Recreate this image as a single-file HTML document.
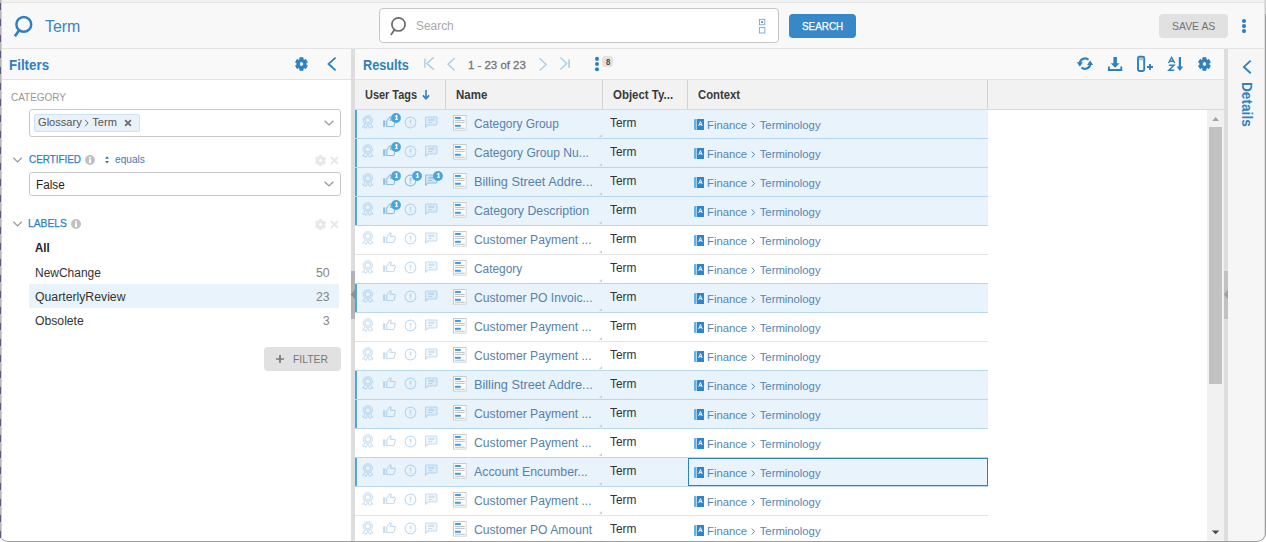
<!DOCTYPE html>
<html>
<head>
<meta charset="utf-8">
<title>Term</title>
<style>
*{box-sizing:border-box;margin:0;padding:0}
html,body{width:1266px;height:542px;overflow:hidden;background:#fff;font-family:"Liberation Sans",sans-serif;}
body{position:relative;color:#333;font-size:13px;}
.a,.t,.ic{position:absolute}
.ic{overflow:visible;display:block}
.t{white-space:nowrap;line-height:1;transform-origin:0 0;z-index:3}
.row{left:355px;width:633px;height:30px;border-bottom:1px solid #e4e4e4;background:transparent}
.row.s{background:#e8f3fb;border-top:1px solid #b7d7ee;border-bottom:1px solid #b7d7ee;z-index:2}
.row.s:before{content:"";position:absolute;left:0;top:0;width:2px;height:28px;background:#4fa6de}
.rt{position:absolute;width:0;height:0;border-left:3px solid transparent;border-bottom:3px solid #cfcfcf;left:599px}
.sel{background:#fff;border:1px solid #c9c9c9;border-radius:3px}
.vs{background:#d2d2d2;width:1px;top:80px;height:29px}

</style>
</head>
<body>
<svg width="0" height="0" style="position:absolute"><defs>
<symbol id="gear" viewBox="-8 -8 16 16" preserveAspectRatio="none"><path d="M-1.76,-4.57 L-1.70,-6.33 L1.70,-6.33 L1.76,-4.57 L3.08,-3.81 L4.63,-4.63 L6.33,-1.70 L4.84,-0.77 L4.84,0.77 L6.33,1.70 L4.63,4.63 L3.08,3.81 L1.76,4.57 L1.70,6.33 L-1.70,6.33 L-1.76,4.57 L-3.08,3.81 L-4.63,4.63 L-6.33,1.70 L-4.84,0.77 L-4.84,-0.77 L-6.33,-1.70 L-4.63,-4.63 L-3.08,-3.81Z M2.3,0 A2.3,2.3 0 1,0 -2.3,0 A2.3,2.3 0 1,0 2.3,0Z" fill="currentColor" fill-rule="evenodd" stroke="currentColor" stroke-width="0.9" stroke-linejoin="round"/></symbol>
<symbol id="rb" viewBox="0 0 12 14"><g fill="none" stroke="currentColor"><circle cx="5.9" cy="5.4" r="3.75" stroke-width="2.6" opacity=".45"/><circle cx="5.9" cy="5.4" r="4.8" stroke-width="0.9" stroke-dasharray="1.6 0.9"/><circle cx="5.9" cy="5.4" r="2.6" stroke-width="0.9"/><path d="M2.9,9.2 L0.6,12.4 L3,12.1 L3.9,13.9 L5.8,10.6" stroke-width="1"/><path d="M8.9,9.2 L11.2,12.4 L8.8,12.1 L7.9,13.9 L6,10.6" stroke-width="1"/></g></symbol>
<symbol id="th" viewBox="0 0 14 12"><rect x="0.1" y="4.6" width="2.4" height="7" fill="currentColor"/><path d="M4,11.3 V5.3 L7.5,0.8 C8.7,0.9 8.8,2 8.4,3 L7.8,4.7 H11.8 C12.8,4.7 13.2,5.4 12.9,6.3 L11.7,10.5 C11.5,11.1 11.1,11.3 10.5,11.3 Z" fill="none" stroke="currentColor" stroke-width="1.25" stroke-linejoin="round"/></symbol>
<symbol id="ex" viewBox="0 0 13 13"><circle cx="6.5" cy="6.5" r="5.35" fill="none" stroke="currentColor" stroke-width="1.1"/><path d="M6.5,3.6 V7.5" stroke="currentColor" stroke-width="1.8" opacity=".8"/><rect x="5.6" y="8.6" width="1.8" height="1" fill="currentColor" opacity=".8"/></symbol>
<symbol id="cm" viewBox="0 0 13 12"><path d="M1.5,0.9 H11 A0.9,0.9 0 0 1 11.9,1.8 V8.1 A0.9,0.9 0 0 1 11,9 H3 L0.6,11.3 V1.8 A0.9,0.9 0 0 1 1.5,0.9Z" fill="currentColor" fill-opacity=".22" stroke="currentColor" stroke-width="1.05" stroke-linejoin="round"/><path d="M3.3,3.8 H9.4" stroke="currentColor" stroke-width="2.2" opacity=".8"/><path d="M3.3,6.5 H7.3" stroke="currentColor" stroke-width="1"/></symbol>
<symbol id="bd" viewBox="0 0 10 10"><circle cx="5" cy="5" r="4.9" fill="#4aa5dc"/><path d="M5.65,2 V6.3" stroke="#fff" stroke-width="1.35" fill="none"/><path d="M5.5,2.3 L3.9,3.7" stroke="#fff" stroke-width="1" fill="none"/><path d="M4,6.3 H7" stroke="#fff" stroke-width="1" fill="none"/></symbol>
<symbol id="doc" viewBox="0 0 14 16"><rect x="0.5" y="0.5" width="13" height="15" fill="#fff" stroke="#c3c3c3" stroke-width="0.9"/><rect x="2" y="2" width="6" height="2" fill="#3b9be0"/><rect x="2" y="5" width="10" height="1" fill="#bdbdbd"/><rect x="2" y="7" width="10" height="1" fill="#bdbdbd"/><rect x="2" y="10" width="6" height="2" fill="#3b9be0"/><rect x="2" y="13" width="10" height="1" fill="#bdbdbd"/></symbol>
<symbol id="cx" viewBox="0 0 10 11"><path d="M1.2,0 H2.4 V11 H1.2 A1.2,1.2 0 0 1 0,9.8 V1.2 A1.2,1.2 0 0 1 1.2,0Z" fill="#5db3e9"/><rect x="2.9" y="0" width="7.1" height="11" fill="#2f84cc"/><path d="M4.7,7 L6.45,2.6 L8.2,7 M5.3,5.6 H7.6" fill="none" stroke="#fff" stroke-width="0.95"/></symbol>
<symbol id="info" viewBox="0 0 10 10"><circle cx="5" cy="5" r="5" fill="#c1c1c1"/><rect x="4.1" y="4.1" width="1.9" height="4" fill="#fff"/><rect x="4.1" y="1.8" width="1.9" height="1.6" fill="#fff"/></symbol>
</defs></svg>
<div class="a" style="left:0;top:0;width:1266px;height:48px;background:#f8f8f8"></div>
<div class="a" style="left:0;top:0;width:1266px;height:2px;background:#f1f1f1"></div>
<div class="a" style="left:0;top:2px;width:1266px;height:1px;background:#e5e5e5"></div>
<div class="a" style="left:0;top:48px;width:1266px;height:1px;background:#e3e3e3"></div>
<svg class="ic" style="left:10px;top:12px" width="26" height="28"><circle cx="13.8" cy="12.4" r="7.4" fill="none" stroke="#2f80c2" stroke-width="2.5"/><path d="M9,18.4 L4.9,24.3" stroke="#2f80c2" stroke-width="2.7"/></svg>
<div id="t_title" class="t" style="left:44.91px;top:18.03px;font-size:16.5px;font-weight:normal;color:#3a84c3;transform:scaleX(0.9642);">Term</div>
<div class="a" style="left:379px;top:8px;width:400px;height:35px;background:#fff;border:1px solid #c6c6c6;border-radius:4px"></div>
<svg class="ic" style="left:386px;top:14px" width="24" height="24"><circle cx="12.5" cy="10.4" r="6.6" fill="none" stroke="#6b6b6b" stroke-width="1.7"/><path d="M8.6,15.6 L4.9,21" stroke="#6b6b6b" stroke-width="1.8"/></svg>
<div id="t_sph" class="t" style="left:415.52px;top:20.42px;font-size:12.5px;font-weight:normal;color:#a9a9a9;transform:scaleX(0.9516);">Search</div>
<svg class="ic" style="left:758px;top:18px" width="8" height="16"><rect x="1.4" y="1.4" width="5.4" height="5.4" fill="none" stroke="#77a6cf" stroke-width="0.9"/><rect x="3.1" y="3.1" width="2" height="2" fill="#5f97c9"/><rect x="1.4" y="9.6" width="5.4" height="5.4" fill="none" stroke="#77a6cf" stroke-width="0.9"/></svg>
<div class="a" style="left:789px;top:14px;width:67px;height:24px;background:#3688c8;border-radius:4px"></div>
<div id="t_sbtn" class="t" style="left:802.17px;top:20.89px;font-size:11px;font-weight:normal;color:#ffffff;transform:scaleX(0.9003);-webkit-text-stroke:.25px #fff;">SEARCH</div>
<div class="a" style="left:1159px;top:14px;width:69px;height:24px;background:#e1e1e1;border-radius:4px"></div>
<div id="t_save" class="t" style="left:1171.70px;top:20.89px;font-size:11px;font-weight:normal;color:#737373;transform:scaleX(0.9490);">SAVE AS</div>
<svg class="ic" style="left:1240px;top:17px" width="8" height="18"><circle cx="4" cy="4" r="2.1" fill="#2f80c2"/><circle cx="4" cy="9.1" r="2.1" fill="#2f80c2"/><circle cx="4" cy="14.1" r="2.1" fill="#2f80c2"/></svg>
<div class="a" style="left:0;top:49px;width:351px;height:30px;background:#f9f9f9"></div>
<div class="a" style="left:0;top:79px;width:351px;height:1px;background:#e2e2e2"></div>
<div id="t_filters" class="t" style="left:8.65px;top:57.10px;font-size:15px;font-weight:bold;color:#2f80c2;transform:scaleX(0.8917);">Filters</div>
<svg class="ic" style="left:294.30px;top:56.00px;color:#2f80c2;" width="14.9" height="16"><use href="#gear"/></svg>
<svg class="ic" style="left:326px;top:55px" width="12" height="18"><path d="M9.6,2.6 L2.6,8.9 L9.6,15.4" fill="none" stroke="#2f80c2" stroke-width="1.9"/></svg>
<div id="t_cat" class="t" style="left:10.67px;top:91.89px;font-size:11px;font-weight:normal;color:#979797;transform:scaleX(0.9042);">CATEGORY</div>
<div class="a sel" style="left:29px;top:109px;width:312px;height:28px"></div>
<div class="a" style="left:34px;top:114px;width:106px;height:18px;background:#e9f2fa;border:1px solid #d0e1f0;border-radius:2px"></div>
<div id="t_chip" class="t" style="left:38.13px;top:116.87px;font-size:11.5px;font-weight:normal;color:#555555;transform:scaleX(0.9652);">Glossary<svg width="5" height="8" style="margin:0 2.8px 0 3px;overflow:visible;vertical-align:-1.2px"><path d="M0.8,0.8 L3.9,4 L0.8,7.2" stroke="#6a6a6a" fill="none" stroke-width="1"/></svg>Term</div>
<svg class="ic" style="left:124px;top:119px" width="8" height="8"><path d="M1.1,1.1 L6.9,6.9 M6.9,1.1 L1.1,6.9" stroke="#6e6e6e" stroke-width="1.8"/></svg>
<svg class="ic" style="left:323px;top:119px" width="12" height="8"><path d="M1.6,1.7 L6,6 L10.4,1.7" fill="none" stroke="#959595" stroke-width="1.2"/></svg>
<svg class="ic" style="left:12px;top:156px" width="11" height="8"><path d="M1.3,1.8 L5.5,5.9 L9.7,1.8" fill="none" stroke="#9a9a9a" stroke-width="1.3"/></svg>
<div id="t_cert" class="t" style="left:28.55px;top:153.69px;font-size:11px;font-weight:normal;color:#2f80c2;transform:scaleX(0.8982);-webkit-text-stroke:.25px #2f80c2;">CERTIFIED</div>
<svg class="ic" style="left:84.80px;top:155.00px;" width="10" height="10"><use href="#info"/></svg>
<svg class="ic" style="left:104px;top:155px" width="6" height="10"><path d="M3,1.2 L4.9,3.8 H1.1Z M3,8.6 L4.9,6 H1.1Z" fill="#2f6db0"/></svg>
<div id="t_eq" class="t" style="left:114.60px;top:154.07px;font-size:11.5px;font-weight:normal;color:#3f79b1;transform:scaleX(0.8810);">equals</div>
<svg class="ic" style="left:313.50px;top:153.50px;color:#e8e8e8;" width="13" height="13"><use href="#gear"/></svg>
<svg class="ic" style="left:329.5px;top:155.5px" width="9" height="9"><path d="M1,1 L8,8 M8,1 L1,8" stroke="#e8e8e8" stroke-width="1.8"/></svg>
<div class="a sel" style="left:29px;top:172px;width:312px;height:24px"></div>
<div id="t_false" class="t" style="left:36.28px;top:179.42px;font-size:12.5px;font-weight:normal;color:#222222;transform:scaleX(0.9376);">False</div>
<svg class="ic" style="left:323px;top:180px" width="12" height="8"><path d="M1.6,1.7 L6,6 L10.4,1.7" fill="none" stroke="#959595" stroke-width="1.2"/></svg>
<svg class="ic" style="left:12px;top:220px" width="11" height="8"><path d="M1.3,1.8 L5.5,5.9 L9.7,1.8" fill="none" stroke="#9a9a9a" stroke-width="1.3"/></svg>
<div id="t_labels" class="t" style="left:28.25px;top:217.54px;font-size:11px;font-weight:normal;color:#2f80c2;transform:scaleX(0.9326);-webkit-text-stroke:.25px #2f80c2;">LABELS</div>
<svg class="ic" style="left:71.00px;top:219.00px;" width="10" height="10"><use href="#info"/></svg>
<svg class="ic" style="left:313.50px;top:217.50px;color:#e8e8e8;" width="13" height="13"><use href="#gear"/></svg>
<svg class="ic" style="left:329.5px;top:219.5px" width="9" height="9"><path d="M1,1 L8,8 M8,1 L1,8" stroke="#e8e8e8" stroke-width="1.8"/></svg>
<div class="a" style="left:29px;top:284px;width:310px;height:24px;background:#e8f3fb"></div>
<div id="t_all" class="t" style="left:35.49px;top:242.02px;font-size:12.5px;font-weight:bold;color:#222222;transform:scaleX(0.9148);">All</div>
<div id="t_l1" class="t" style="left:34.99px;top:267.32px;font-size:12.5px;font-weight:normal;color:#333333;transform:scaleX(0.9572);">NewChange</div>
<div id="t_l2" class="t" style="left:35.05px;top:291.32px;font-size:12.5px;font-weight:normal;color:#333333;transform:scaleX(0.9797);">QuarterlyReview</div>
<div id="t_l3" class="t" style="left:35.48px;top:315.22px;font-size:12.5px;font-weight:normal;color:#333333;transform:scaleX(0.9751);">Obsolete</div>
<div id="t_c1" class="t" style="left:315.87px;top:267.32px;font-size:12.5px;font-weight:normal;color:#858585;transform:scaleX(0.9851);">50</div>
<div id="t_c2" class="t" style="left:315.56px;top:291.32px;font-size:12.5px;font-weight:normal;color:#858585;transform:scaleX(0.9737);">23</div>
<div id="t_c3" class="t" style="left:322.61px;top:315.22px;font-size:12.5px;font-weight:normal;color:#858585;transform:scaleX(0.9441);">3</div>
<div class="a" style="left:264px;top:347px;width:77px;height:24px;background:#e1e1e1;border-radius:4px"></div>
<svg class="ic" style="left:275px;top:354px" width="10" height="10"><path d="M5,1 V9 M1,5 H9" stroke="#7a7a7a" stroke-width="1.7"/></svg>
<div id="t_fbtn" class="t" style="left:292.69px;top:353.89px;font-size:11px;font-weight:normal;color:#777777;transform:scaleX(0.9405);">FILTER</div>
<div class="a" style="left:351px;top:49px;width:4px;height:493px;background:#dddddd"></div>
<div class="a" style="left:351px;top:271px;width:4px;height:48px;background:#b3b3b3"></div>
<svg class="ic" style="left:350px;top:289px" width="6" height="11"><path d="M0.6,5.4 L5,0.8 V10Z" fill="#8f8f8f"/></svg>
<div class="a" style="left:355px;top:49px;width:869px;height:30px;background:#f9f9f9"></div>
<div class="a" style="left:355px;top:79px;width:869px;height:1px;background:#e2e2e2"></div>
<div id="t_results" class="t" style="left:363.12px;top:57.10px;font-size:15px;font-weight:bold;color:#2f80c2;transform:scaleX(0.8464);">Results</div>
<svg class="ic" style="left:422px;top:55px" width="14" height="18"><path d="M2.9,3.6 V12.8" stroke="#aacfe6" stroke-width="1.4"/><path d="M11.8,2.4 L4.8,8.5 L11.8,14.6" fill="none" stroke="#aacfe6" stroke-width="1.4"/></svg>
<svg class="ic" style="left:445px;top:55px" width="12" height="18"><path d="M9.8,3 L3,9.3 L9.8,15.5" fill="none" stroke="#aacfe6" stroke-width="1.4"/></svg>
<div id="t_pager" class="t" style="left:467.66px;top:60.32px;font-size:11.5px;font-weight:normal;color:#747474;transform:scaleX(0.9932);-webkit-text-stroke:.3px #747474;">1 - 23 of 23</div>
<svg class="ic" style="left:537px;top:55px" width="12" height="18"><path d="M2.5,3.2 L9.2,9.4 L2.5,15.6" fill="none" stroke="#aacfe6" stroke-width="1.4"/></svg>
<svg class="ic" style="left:558px;top:55px" width="14" height="18"><path d="M11.1,4.3 V12.7" stroke="#aacfe6" stroke-width="1.7"/><path d="M2.4,2.4 L8.7,8.4 L2.4,14.5" fill="none" stroke="#aacfe6" stroke-width="1.4"/></svg>
<svg class="ic" style="left:593px;top:55px" width="8" height="18"><circle cx="4" cy="3.9" r="2.05" fill="#2f80c2"/><circle cx="4" cy="9" r="2.05" fill="#2f80c2"/><circle cx="4" cy="14.2" r="2.05" fill="#2f80c2"/></svg>
<div class="a" style="left:602.3px;top:56px;width:10.5px;height:11px;background:#e2e2e2;border-radius:3px"></div>
<div class="t" style="left:605.6px;top:58px;font-size:8.5px;font-weight:bold;color:#4a4a4a;transform:scaleX(.92)">8</div>
<svg class="ic" style="left:1076px;top:56px" width="18" height="16">
<path d="M12.51,3.70 A5.25,5.25 0 0 0 3.80,6.87" fill="none" stroke="#2f80c2" stroke-width="2.2"/>
<path d="M0.8,6.3 H6.9 L3.85,10.8Z" fill="#2f80c2"/>
<path d="M5.49,11.50 A5.25,5.25 0 0 0 14.20,8.33" fill="none" stroke="#2f80c2" stroke-width="2.2"/>
<path d="M11.1,8.9 H17.2 L14.15,4.4Z" fill="#2f80c2"/></svg>
<svg class="ic" style="left:1107px;top:56px" width="16" height="16">
<path d="M6.4,1 H9.9 V7.2 H12.6 L8.15,11.7 L3.7,7.2 H6.4Z" fill="#2f80c2"/>
<path d="M1.9,10.4 V14 H14.3 V10.4" fill="none" stroke="#2f80c2" stroke-width="1.9"/></svg>
<svg class="ic" style="left:1136px;top:55px" width="20" height="18">
<rect x="2" y="1.8" width="6.2" height="14.2" rx="1.4" fill="none" stroke="#2f80c2" stroke-width="1.9"/>
<rect x="2.9" y="3.4" width="4.4" height="1.7" fill="#8fbde2"/>
<path d="M14,8.9 V15 M11,11.95 H17" stroke="#2f80c2" stroke-width="1.9"/></svg>
<svg class="ic" style="left:1167px;top:56px" width="18" height="16">
<path d="M1.5,7 L4.6,1.5 L7.7,7 M2.7,5.2 H6.5" fill="none" stroke="#2f80c2" stroke-width="1.5"/>
<path d="M1.9,9.3 H7 L1.9,14.3 H7.3" fill="none" stroke="#2f80c2" stroke-width="1.5"/>
<path d="M12.9,1 V11.6" stroke="#2f80c2" stroke-width="2.2"/><path d="M9.6,10.4 H16.2 L12.9,15Z" fill="#2f80c2"/></svg>
<svg class="ic" style="left:1197.30px;top:56.00px;color:#2f80c2;" width="14.9" height="16"><use href="#gear"/></svg>
<div class="a" style="left:355px;top:80px;width:869px;height:29px;background:#f2f2f2"></div>
<div class="a" style="left:355px;top:109px;width:869px;height:1px;background:#d9d9d9;z-index:3"></div>
<div class="a vs" style="left:445px"></div>
<div class="a vs" style="left:602px"></div>
<div class="a vs" style="left:687px"></div>
<div class="a vs" style="left:987px"></div>
<div id="t_h1" class="t" style="left:364.76px;top:89.42px;font-size:12.5px;font-weight:bold;color:#3a3a3a;transform:scaleX(0.8728);">User Tags</div>
<div id="t_h2" class="t" style="left:455.57px;top:89.42px;font-size:12.5px;font-weight:bold;color:#3a3a3a;transform:scaleX(0.9193);">Name</div>
<div id="t_h3" class="t" style="left:613.01px;top:89.42px;font-size:12.5px;font-weight:bold;color:#3a3a3a;transform:scaleX(0.9168);">Object Ty...</div>
<div id="t_h4" class="t" style="left:698.42px;top:89.42px;font-size:12.5px;font-weight:bold;color:#3a3a3a;transform:scaleX(0.9055);">Context</div>
<svg class="ic" style="left:421px;top:89px" width="10" height="12"><path d="M5,1 V9.4" stroke="#2f80c2" stroke-width="1.6"/><path d="M1.9,6.4 L5,9.8 L8.1,6.4" fill="none" stroke="#2f80c2" stroke-width="1.6"/></svg>
<div class="a row s" style="top:109px"></div>
<div class="a row s" style="top:138px"></div>
<div class="a row s" style="top:167px"></div>
<div class="a row s" style="top:196px"></div>
<div class="a row" style="top:225px"></div>
<div class="a row" style="top:254px"></div>
<div class="a row s" style="top:283px"></div>
<div class="a row" style="top:312px"></div>
<div class="a row" style="top:341px"></div>
<div class="a row s" style="top:370px"></div>
<div class="a row s" style="top:399px"></div>
<div class="a row" style="top:428px"></div>
<div class="a row s" style="top:457px"></div>
<div class="a row" style="top:486px"></div>
<div class="a row" style="top:515px"></div>
<div class="a" style="left:0;top:109px;z-index:3">
<svg class="ic" style="left:362.20px;top:6.30px;color:#b6d4ec;" width="11.8" height="13.8"><use href="#rb"/></svg>
<svg class="ic" style="left:382.50px;top:7.00px;color:#90bfe4;" width="13.2" height="11.3"><use href="#th"/></svg>
<svg class="ic" style="left:403.55px;top:6.55px;color:#b6d4ec;" width="13" height="13"><use href="#ex"/></svg>
<svg class="ic" style="left:424.90px;top:6.60px;color:#b6d4ec;" width="13" height="12"><use href="#cm"/></svg>
<svg class="ic" style="left:391.25px;top:4.30px;" width="10" height="10"><use href="#bd"/></svg>
<svg class="ic" style="left:453.10px;top:6.10px;" width="13.7" height="15.7"><use href="#doc"/></svg>
<svg class="ic" style="left:694.00px;top:10.00px;" width="10" height="11"><use href="#cx"/></svg>
<div class="rt" style="top:25px"></div>
</div>
<div id="t_n0" class="t" style="left:474.00px;top:118.32px;font-size:12.5px;font-weight:normal;color:#5781ab;transform:scaleX(0.9535);">Category Group</div>
<div id="t_o0" class="t" style="left:609.70px;top:116.62px;font-size:12.5px;font-weight:normal;color:#333333;transform:scaleX(0.9496);">Term</div>
<div id="t_x0" class="t" style="left:707.13px;top:120.27px;font-size:11.5px;font-weight:normal;color:#5585b5;transform:scaleX(0.9803);">Finance<svg width="4.5" height="7" style="margin:0 4.2px 0 4.2px;overflow:visible;vertical-align:0.3px"><path d="M0.7,0.6 L3.5,3.5 L0.7,6.4" stroke="#5585b5" fill="none" stroke-width="1"/></svg>Terminology</div>
<div class="a" style="left:0;top:138px;z-index:3">
<svg class="ic" style="left:362.20px;top:6.30px;color:#b6d4ec;" width="11.8" height="13.8"><use href="#rb"/></svg>
<svg class="ic" style="left:382.50px;top:7.00px;color:#90bfe4;" width="13.2" height="11.3"><use href="#th"/></svg>
<svg class="ic" style="left:403.55px;top:6.55px;color:#b6d4ec;" width="13" height="13"><use href="#ex"/></svg>
<svg class="ic" style="left:424.90px;top:6.60px;color:#b6d4ec;" width="13" height="12"><use href="#cm"/></svg>
<svg class="ic" style="left:391.25px;top:4.30px;" width="10" height="10"><use href="#bd"/></svg>
<svg class="ic" style="left:453.10px;top:6.10px;" width="13.7" height="15.7"><use href="#doc"/></svg>
<svg class="ic" style="left:694.00px;top:10.00px;" width="10" height="11"><use href="#cx"/></svg>
<div class="rt" style="top:25px"></div>
</div>
<div id="t_n1" class="t" style="left:474.42px;top:147.32px;font-size:12.5px;font-weight:normal;color:#5781ab;transform:scaleX(0.9670);">Category Group Nu...</div>
<div id="t_o1" class="t" style="left:609.70px;top:145.62px;font-size:12.5px;font-weight:normal;color:#333333;transform:scaleX(0.9496);">Term</div>
<div id="t_x1" class="t" style="left:707.13px;top:149.27px;font-size:11.5px;font-weight:normal;color:#5585b5;transform:scaleX(0.9803);">Finance<svg width="4.5" height="7" style="margin:0 4.2px 0 4.2px;overflow:visible;vertical-align:0.3px"><path d="M0.7,0.6 L3.5,3.5 L0.7,6.4" stroke="#5585b5" fill="none" stroke-width="1"/></svg>Terminology</div>
<div class="a" style="left:0;top:167px;z-index:3">
<svg class="ic" style="left:362.20px;top:6.30px;color:#b6d4ec;" width="11.8" height="13.8"><use href="#rb"/></svg>
<svg class="ic" style="left:382.50px;top:7.00px;color:#90bfe4;" width="13.2" height="11.3"><use href="#th"/></svg>
<svg class="ic" style="left:403.55px;top:6.55px;color:#90bfe4;" width="13" height="13"><use href="#ex"/></svg>
<svg class="ic" style="left:424.90px;top:6.60px;color:#90bfe4;" width="13" height="12"><use href="#cm"/></svg>
<svg class="ic" style="left:391.25px;top:4.30px;" width="10" height="10"><use href="#bd"/></svg>
<svg class="ic" style="left:411.75px;top:4.30px;" width="10" height="10"><use href="#bd"/></svg>
<svg class="ic" style="left:432.95px;top:4.30px;" width="10" height="10"><use href="#bd"/></svg>
<svg class="ic" style="left:453.10px;top:6.10px;" width="13.7" height="15.7"><use href="#doc"/></svg>
<svg class="ic" style="left:694.00px;top:10.00px;" width="10" height="11"><use href="#cx"/></svg>
<div class="rt" style="top:25px"></div>
</div>
<div id="t_n2" class="t" style="left:473.79px;top:176.32px;font-size:12.5px;font-weight:normal;color:#5781ab;transform:scaleX(1.0168);">Billing Street Addre...</div>
<div id="t_o2" class="t" style="left:609.70px;top:174.62px;font-size:12.5px;font-weight:normal;color:#333333;transform:scaleX(0.9496);">Term</div>
<div id="t_x2" class="t" style="left:707.13px;top:178.27px;font-size:11.5px;font-weight:normal;color:#5585b5;transform:scaleX(0.9803);">Finance<svg width="4.5" height="7" style="margin:0 4.2px 0 4.2px;overflow:visible;vertical-align:0.3px"><path d="M0.7,0.6 L3.5,3.5 L0.7,6.4" stroke="#5585b5" fill="none" stroke-width="1"/></svg>Terminology</div>
<div class="a" style="left:0;top:196px;z-index:3">
<svg class="ic" style="left:362.20px;top:6.30px;color:#b6d4ec;" width="11.8" height="13.8"><use href="#rb"/></svg>
<svg class="ic" style="left:382.50px;top:7.00px;color:#90bfe4;" width="13.2" height="11.3"><use href="#th"/></svg>
<svg class="ic" style="left:403.55px;top:6.55px;color:#b6d4ec;" width="13" height="13"><use href="#ex"/></svg>
<svg class="ic" style="left:424.90px;top:6.60px;color:#b6d4ec;" width="13" height="12"><use href="#cm"/></svg>
<svg class="ic" style="left:391.25px;top:4.30px;" width="10" height="10"><use href="#bd"/></svg>
<svg class="ic" style="left:453.10px;top:6.10px;" width="13.7" height="15.7"><use href="#doc"/></svg>
<svg class="ic" style="left:694.00px;top:10.00px;" width="10" height="11"><use href="#cx"/></svg>
<div class="rt" style="top:25px"></div>
</div>
<div id="t_n3" class="t" style="left:474.28px;top:205.32px;font-size:12.5px;font-weight:normal;color:#5781ab;transform:scaleX(0.9860);">Category Description</div>
<div id="t_o3" class="t" style="left:609.70px;top:203.62px;font-size:12.5px;font-weight:normal;color:#333333;transform:scaleX(0.9496);">Term</div>
<div id="t_x3" class="t" style="left:707.13px;top:207.27px;font-size:11.5px;font-weight:normal;color:#5585b5;transform:scaleX(0.9803);">Finance<svg width="4.5" height="7" style="margin:0 4.2px 0 4.2px;overflow:visible;vertical-align:0.3px"><path d="M0.7,0.6 L3.5,3.5 L0.7,6.4" stroke="#5585b5" fill="none" stroke-width="1"/></svg>Terminology</div>
<div class="a" style="left:0;top:225px;z-index:3">
<svg class="ic" style="left:362.20px;top:6.30px;color:#c4dcf0;" width="11.8" height="13.8"><use href="#rb"/></svg>
<svg class="ic" style="left:382.50px;top:7.00px;color:#c4dcf0;" width="13.2" height="11.3"><use href="#th"/></svg>
<svg class="ic" style="left:403.55px;top:6.55px;color:#c4dcf0;" width="13" height="13"><use href="#ex"/></svg>
<svg class="ic" style="left:424.90px;top:6.60px;color:#c4dcf0;" width="13" height="12"><use href="#cm"/></svg>
<svg class="ic" style="left:453.10px;top:6.10px;" width="13.7" height="15.7"><use href="#doc"/></svg>
<svg class="ic" style="left:694.00px;top:10.00px;" width="10" height="11"><use href="#cx"/></svg>
<div class="rt" style="top:25px"></div>
</div>
<div id="t_n4" class="t" style="left:474.05px;top:234.32px;font-size:12.5px;font-weight:normal;color:#5781ab;transform:scaleX(0.9729);">Customer Payment ...</div>
<div id="t_o4" class="t" style="left:609.70px;top:232.62px;font-size:12.5px;font-weight:normal;color:#333333;transform:scaleX(0.9496);">Term</div>
<div id="t_x4" class="t" style="left:707.13px;top:236.27px;font-size:11.5px;font-weight:normal;color:#5585b5;transform:scaleX(0.9803);">Finance<svg width="4.5" height="7" style="margin:0 4.2px 0 4.2px;overflow:visible;vertical-align:0.3px"><path d="M0.7,0.6 L3.5,3.5 L0.7,6.4" stroke="#5585b5" fill="none" stroke-width="1"/></svg>Terminology</div>
<div class="a" style="left:0;top:254px;z-index:3">
<svg class="ic" style="left:362.20px;top:6.30px;color:#c4dcf0;" width="11.8" height="13.8"><use href="#rb"/></svg>
<svg class="ic" style="left:382.50px;top:7.00px;color:#c4dcf0;" width="13.2" height="11.3"><use href="#th"/></svg>
<svg class="ic" style="left:403.55px;top:6.55px;color:#c4dcf0;" width="13" height="13"><use href="#ex"/></svg>
<svg class="ic" style="left:424.90px;top:6.60px;color:#c4dcf0;" width="13" height="12"><use href="#cm"/></svg>
<svg class="ic" style="left:453.10px;top:6.10px;" width="13.7" height="15.7"><use href="#doc"/></svg>
<svg class="ic" style="left:694.00px;top:10.00px;" width="10" height="11"><use href="#cx"/></svg>
<div class="rt" style="top:25px"></div>
</div>
<div id="t_n5" class="t" style="left:474.08px;top:263.22px;font-size:12.5px;font-weight:normal;color:#5781ab;transform:scaleX(0.9489);">Category</div>
<div id="t_o5" class="t" style="left:609.70px;top:261.62px;font-size:12.5px;font-weight:normal;color:#333333;transform:scaleX(0.9496);">Term</div>
<div id="t_x5" class="t" style="left:707.13px;top:265.27px;font-size:11.5px;font-weight:normal;color:#5585b5;transform:scaleX(0.9803);">Finance<svg width="4.5" height="7" style="margin:0 4.2px 0 4.2px;overflow:visible;vertical-align:0.3px"><path d="M0.7,0.6 L3.5,3.5 L0.7,6.4" stroke="#5585b5" fill="none" stroke-width="1"/></svg>Terminology</div>
<div class="a" style="left:0;top:283px;z-index:3">
<svg class="ic" style="left:362.20px;top:6.30px;color:#b6d4ec;" width="11.8" height="13.8"><use href="#rb"/></svg>
<svg class="ic" style="left:382.50px;top:7.00px;color:#b6d4ec;" width="13.2" height="11.3"><use href="#th"/></svg>
<svg class="ic" style="left:403.55px;top:6.55px;color:#b6d4ec;" width="13" height="13"><use href="#ex"/></svg>
<svg class="ic" style="left:424.90px;top:6.60px;color:#b6d4ec;" width="13" height="12"><use href="#cm"/></svg>
<svg class="ic" style="left:453.10px;top:6.10px;" width="13.7" height="15.7"><use href="#doc"/></svg>
<svg class="ic" style="left:694.00px;top:10.00px;" width="10" height="11"><use href="#cx"/></svg>
<div class="rt" style="top:25px"></div>
</div>
<div id="t_n6" class="t" style="left:474.26px;top:292.32px;font-size:12.5px;font-weight:normal;color:#5781ab;transform:scaleX(0.9700);">Customer PO Invoic...</div>
<div id="t_o6" class="t" style="left:609.70px;top:290.62px;font-size:12.5px;font-weight:normal;color:#333333;transform:scaleX(0.9496);">Term</div>
<div id="t_x6" class="t" style="left:707.13px;top:294.27px;font-size:11.5px;font-weight:normal;color:#5585b5;transform:scaleX(0.9803);">Finance<svg width="4.5" height="7" style="margin:0 4.2px 0 4.2px;overflow:visible;vertical-align:0.3px"><path d="M0.7,0.6 L3.5,3.5 L0.7,6.4" stroke="#5585b5" fill="none" stroke-width="1"/></svg>Terminology</div>
<div class="a" style="left:0;top:312px;z-index:3">
<svg class="ic" style="left:362.20px;top:6.30px;color:#c4dcf0;" width="11.8" height="13.8"><use href="#rb"/></svg>
<svg class="ic" style="left:382.50px;top:7.00px;color:#c4dcf0;" width="13.2" height="11.3"><use href="#th"/></svg>
<svg class="ic" style="left:403.55px;top:6.55px;color:#c4dcf0;" width="13" height="13"><use href="#ex"/></svg>
<svg class="ic" style="left:424.90px;top:6.60px;color:#c4dcf0;" width="13" height="12"><use href="#cm"/></svg>
<svg class="ic" style="left:453.10px;top:6.10px;" width="13.7" height="15.7"><use href="#doc"/></svg>
<svg class="ic" style="left:694.00px;top:10.00px;" width="10" height="11"><use href="#cx"/></svg>
<div class="rt" style="top:25px"></div>
</div>
<div id="t_n7" class="t" style="left:474.05px;top:321.32px;font-size:12.5px;font-weight:normal;color:#5781ab;transform:scaleX(0.9729);">Customer Payment ...</div>
<div id="t_o7" class="t" style="left:609.70px;top:319.62px;font-size:12.5px;font-weight:normal;color:#333333;transform:scaleX(0.9496);">Term</div>
<div id="t_x7" class="t" style="left:707.13px;top:323.27px;font-size:11.5px;font-weight:normal;color:#5585b5;transform:scaleX(0.9803);">Finance<svg width="4.5" height="7" style="margin:0 4.2px 0 4.2px;overflow:visible;vertical-align:0.3px"><path d="M0.7,0.6 L3.5,3.5 L0.7,6.4" stroke="#5585b5" fill="none" stroke-width="1"/></svg>Terminology</div>
<div class="a" style="left:0;top:341px;z-index:3">
<svg class="ic" style="left:362.20px;top:6.30px;color:#c4dcf0;" width="11.8" height="13.8"><use href="#rb"/></svg>
<svg class="ic" style="left:382.50px;top:7.00px;color:#c4dcf0;" width="13.2" height="11.3"><use href="#th"/></svg>
<svg class="ic" style="left:403.55px;top:6.55px;color:#c4dcf0;" width="13" height="13"><use href="#ex"/></svg>
<svg class="ic" style="left:424.90px;top:6.60px;color:#c4dcf0;" width="13" height="12"><use href="#cm"/></svg>
<svg class="ic" style="left:453.10px;top:6.10px;" width="13.7" height="15.7"><use href="#doc"/></svg>
<svg class="ic" style="left:694.00px;top:10.00px;" width="10" height="11"><use href="#cx"/></svg>
<div class="rt" style="top:25px"></div>
</div>
<div id="t_n8" class="t" style="left:474.05px;top:350.32px;font-size:12.5px;font-weight:normal;color:#5781ab;transform:scaleX(0.9729);">Customer Payment ...</div>
<div id="t_o8" class="t" style="left:609.70px;top:348.62px;font-size:12.5px;font-weight:normal;color:#333333;transform:scaleX(0.9496);">Term</div>
<div id="t_x8" class="t" style="left:707.13px;top:352.27px;font-size:11.5px;font-weight:normal;color:#5585b5;transform:scaleX(0.9803);">Finance<svg width="4.5" height="7" style="margin:0 4.2px 0 4.2px;overflow:visible;vertical-align:0.3px"><path d="M0.7,0.6 L3.5,3.5 L0.7,6.4" stroke="#5585b5" fill="none" stroke-width="1"/></svg>Terminology</div>
<div class="a" style="left:0;top:370px;z-index:3">
<svg class="ic" style="left:362.20px;top:6.30px;color:#b6d4ec;" width="11.8" height="13.8"><use href="#rb"/></svg>
<svg class="ic" style="left:382.50px;top:7.00px;color:#b6d4ec;" width="13.2" height="11.3"><use href="#th"/></svg>
<svg class="ic" style="left:403.55px;top:6.55px;color:#b6d4ec;" width="13" height="13"><use href="#ex"/></svg>
<svg class="ic" style="left:424.90px;top:6.60px;color:#b6d4ec;" width="13" height="12"><use href="#cm"/></svg>
<svg class="ic" style="left:453.10px;top:6.10px;" width="13.7" height="15.7"><use href="#doc"/></svg>
<svg class="ic" style="left:694.00px;top:10.00px;" width="10" height="11"><use href="#cx"/></svg>
<div class="rt" style="top:25px"></div>
</div>
<div id="t_n9" class="t" style="left:473.79px;top:379.32px;font-size:12.5px;font-weight:normal;color:#5781ab;transform:scaleX(1.0168);">Billing Street Addre...</div>
<div id="t_o9" class="t" style="left:609.70px;top:377.62px;font-size:12.5px;font-weight:normal;color:#333333;transform:scaleX(0.9496);">Term</div>
<div id="t_x9" class="t" style="left:707.13px;top:381.27px;font-size:11.5px;font-weight:normal;color:#5585b5;transform:scaleX(0.9803);">Finance<svg width="4.5" height="7" style="margin:0 4.2px 0 4.2px;overflow:visible;vertical-align:0.3px"><path d="M0.7,0.6 L3.5,3.5 L0.7,6.4" stroke="#5585b5" fill="none" stroke-width="1"/></svg>Terminology</div>
<div class="a" style="left:0;top:399px;z-index:3">
<svg class="ic" style="left:362.20px;top:6.30px;color:#b6d4ec;" width="11.8" height="13.8"><use href="#rb"/></svg>
<svg class="ic" style="left:382.50px;top:7.00px;color:#b6d4ec;" width="13.2" height="11.3"><use href="#th"/></svg>
<svg class="ic" style="left:403.55px;top:6.55px;color:#b6d4ec;" width="13" height="13"><use href="#ex"/></svg>
<svg class="ic" style="left:424.90px;top:6.60px;color:#b6d4ec;" width="13" height="12"><use href="#cm"/></svg>
<svg class="ic" style="left:453.10px;top:6.10px;" width="13.7" height="15.7"><use href="#doc"/></svg>
<svg class="ic" style="left:694.00px;top:10.00px;" width="10" height="11"><use href="#cx"/></svg>
<div class="rt" style="top:25px"></div>
</div>
<div id="t_n10" class="t" style="left:474.05px;top:408.32px;font-size:12.5px;font-weight:normal;color:#5781ab;transform:scaleX(0.9729);">Customer Payment ...</div>
<div id="t_o10" class="t" style="left:609.70px;top:406.62px;font-size:12.5px;font-weight:normal;color:#333333;transform:scaleX(0.9496);">Term</div>
<div id="t_x10" class="t" style="left:707.13px;top:410.27px;font-size:11.5px;font-weight:normal;color:#5585b5;transform:scaleX(0.9803);">Finance<svg width="4.5" height="7" style="margin:0 4.2px 0 4.2px;overflow:visible;vertical-align:0.3px"><path d="M0.7,0.6 L3.5,3.5 L0.7,6.4" stroke="#5585b5" fill="none" stroke-width="1"/></svg>Terminology</div>
<div class="a" style="left:0;top:428px;z-index:3">
<svg class="ic" style="left:362.20px;top:6.30px;color:#c4dcf0;" width="11.8" height="13.8"><use href="#rb"/></svg>
<svg class="ic" style="left:382.50px;top:7.00px;color:#c4dcf0;" width="13.2" height="11.3"><use href="#th"/></svg>
<svg class="ic" style="left:403.55px;top:6.55px;color:#c4dcf0;" width="13" height="13"><use href="#ex"/></svg>
<svg class="ic" style="left:424.90px;top:6.60px;color:#c4dcf0;" width="13" height="12"><use href="#cm"/></svg>
<svg class="ic" style="left:453.10px;top:6.10px;" width="13.7" height="15.7"><use href="#doc"/></svg>
<svg class="ic" style="left:694.00px;top:10.00px;" width="10" height="11"><use href="#cx"/></svg>
<div class="rt" style="top:25px"></div>
</div>
<div id="t_n11" class="t" style="left:474.05px;top:437.32px;font-size:12.5px;font-weight:normal;color:#5781ab;transform:scaleX(0.9729);">Customer Payment ...</div>
<div id="t_o11" class="t" style="left:609.70px;top:435.62px;font-size:12.5px;font-weight:normal;color:#333333;transform:scaleX(0.9496);">Term</div>
<div id="t_x11" class="t" style="left:707.13px;top:439.27px;font-size:11.5px;font-weight:normal;color:#5585b5;transform:scaleX(0.9803);">Finance<svg width="4.5" height="7" style="margin:0 4.2px 0 4.2px;overflow:visible;vertical-align:0.3px"><path d="M0.7,0.6 L3.5,3.5 L0.7,6.4" stroke="#5585b5" fill="none" stroke-width="1"/></svg>Terminology</div>
<div class="a" style="left:0;top:457px;z-index:3">
<svg class="ic" style="left:362.20px;top:6.30px;color:#b6d4ec;" width="11.8" height="13.8"><use href="#rb"/></svg>
<svg class="ic" style="left:382.50px;top:7.00px;color:#b6d4ec;" width="13.2" height="11.3"><use href="#th"/></svg>
<svg class="ic" style="left:403.55px;top:6.55px;color:#b6d4ec;" width="13" height="13"><use href="#ex"/></svg>
<svg class="ic" style="left:424.90px;top:6.60px;color:#b6d4ec;" width="13" height="12"><use href="#cm"/></svg>
<svg class="ic" style="left:453.10px;top:6.10px;" width="13.7" height="15.7"><use href="#doc"/></svg>
<svg class="ic" style="left:694.00px;top:10.00px;" width="10" height="11"><use href="#cx"/></svg>
<div class="rt" style="top:25px"></div>
</div>
<div id="t_n12" class="t" style="left:474.05px;top:466.32px;font-size:12.5px;font-weight:normal;color:#5781ab;transform:scaleX(0.9862);">Account Encumber...</div>
<div id="t_o12" class="t" style="left:609.70px;top:464.62px;font-size:12.5px;font-weight:normal;color:#333333;transform:scaleX(0.9496);">Term</div>
<div id="t_x12" class="t" style="left:707.13px;top:468.27px;font-size:11.5px;font-weight:normal;color:#5585b5;transform:scaleX(0.9803);">Finance<svg width="4.5" height="7" style="margin:0 4.2px 0 4.2px;overflow:visible;vertical-align:0.3px"><path d="M0.7,0.6 L3.5,3.5 L0.7,6.4" stroke="#5585b5" fill="none" stroke-width="1"/></svg>Terminology</div>
<div class="a" style="left:0;top:486px;z-index:3">
<svg class="ic" style="left:362.20px;top:6.30px;color:#c4dcf0;" width="11.8" height="13.8"><use href="#rb"/></svg>
<svg class="ic" style="left:382.50px;top:7.00px;color:#c4dcf0;" width="13.2" height="11.3"><use href="#th"/></svg>
<svg class="ic" style="left:403.55px;top:6.55px;color:#c4dcf0;" width="13" height="13"><use href="#ex"/></svg>
<svg class="ic" style="left:424.90px;top:6.60px;color:#c4dcf0;" width="13" height="12"><use href="#cm"/></svg>
<svg class="ic" style="left:453.10px;top:6.10px;" width="13.7" height="15.7"><use href="#doc"/></svg>
<svg class="ic" style="left:694.00px;top:10.00px;" width="10" height="11"><use href="#cx"/></svg>
<div class="rt" style="top:25px"></div>
</div>
<div id="t_n13" class="t" style="left:474.05px;top:495.32px;font-size:12.5px;font-weight:normal;color:#5781ab;transform:scaleX(0.9729);">Customer Payment ...</div>
<div id="t_o13" class="t" style="left:609.70px;top:493.62px;font-size:12.5px;font-weight:normal;color:#333333;transform:scaleX(0.9496);">Term</div>
<div id="t_x13" class="t" style="left:707.13px;top:497.27px;font-size:11.5px;font-weight:normal;color:#5585b5;transform:scaleX(0.9803);">Finance<svg width="4.5" height="7" style="margin:0 4.2px 0 4.2px;overflow:visible;vertical-align:0.3px"><path d="M0.7,0.6 L3.5,3.5 L0.7,6.4" stroke="#5585b5" fill="none" stroke-width="1"/></svg>Terminology</div>
<div class="a" style="left:0;top:515px;z-index:3">
<svg class="ic" style="left:362.20px;top:6.30px;color:#c4dcf0;" width="11.8" height="13.8"><use href="#rb"/></svg>
<svg class="ic" style="left:382.50px;top:7.00px;color:#c4dcf0;" width="13.2" height="11.3"><use href="#th"/></svg>
<svg class="ic" style="left:403.55px;top:6.55px;color:#c4dcf0;" width="13" height="13"><use href="#ex"/></svg>
<svg class="ic" style="left:424.90px;top:6.60px;color:#c4dcf0;" width="13" height="12"><use href="#cm"/></svg>
<svg class="ic" style="left:453.10px;top:6.10px;" width="13.7" height="15.7"><use href="#doc"/></svg>
<svg class="ic" style="left:694.00px;top:10.00px;" width="10" height="11"><use href="#cx"/></svg>
<div class="rt" style="top:25px"></div>
</div>
<div id="t_n14" class="t" style="left:474.05px;top:524.32px;font-size:12.5px;font-weight:normal;color:#5781ab;transform:scaleX(0.9706);">Customer PO Amount</div>
<div id="t_o14" class="t" style="left:609.70px;top:522.62px;font-size:12.5px;font-weight:normal;color:#333333;transform:scaleX(0.9496);">Term</div>
<div id="t_x14" class="t" style="left:707.13px;top:526.27px;font-size:11.5px;font-weight:normal;color:#5585b5;transform:scaleX(0.9803);">Finance<svg width="4.5" height="7" style="margin:0 4.2px 0 4.2px;overflow:visible;vertical-align:0.3px"><path d="M0.7,0.6 L3.5,3.5 L0.7,6.4" stroke="#5585b5" fill="none" stroke-width="1"/></svg>Terminology</div>
<div class="a" style="left:688px;top:458px;width:300px;height:28px;border:1px solid #2f80c2;z-index:4"></div>
<div class="a" style="left:1207px;top:110px;width:17px;height:432px;background:#f1f1f1;z-index:5"></div>
<div class="a" style="left:1209px;top:127px;width:13px;height:257px;background:#c1c1c1;z-index:5"></div>
<svg class="ic" style="left:1211px;top:116px;z-index:5" width="10" height="6"><path d="M1.2,5 L4.6,1 L8,5Z" fill="#a3a3a3"/></svg>
<svg class="ic" style="left:1211px;top:529px;z-index:5" width="10" height="6"><path d="M0.8,1.4 L4.6,5.2 L8.4,1.4Z" fill="#4a4a4a"/></svg>
<div class="a" style="left:1224px;top:49px;width:4px;height:493px;background:#dddddd;z-index:5"></div>
<div class="a" style="left:1224px;top:271px;width:4px;height:48px;background:#c2c2c2;z-index:5"></div>
<svg class="ic" style="left:1223px;top:289px;z-index:5" width="6" height="11"><path d="M0.6,5.4 L5,0.8 V10Z" fill="#a0a0a0"/></svg>
<div class="a" style="left:1228px;top:49px;width:38px;height:493px;background:#f6f6f6;z-index:5"></div>
<svg class="ic" style="left:1240px;top:58px;z-index:6" width="14" height="18"><path d="M10.7,2.6 L3.9,8.9 L10.7,15.2" fill="none" stroke="#2f80c2" stroke-width="1.9"/></svg>
<div id="t_details" class="t" style="left:1254.2px;top:81.5px;font-size:14px;font-weight:bold;color:#2f80c2;transform-origin:0 0;transform:rotate(90deg) scaleX(.975);z-index:6">Details</div>
<div class="a" style="left:0;top:0;width:1px;height:542px;z-index:9;background:repeating-linear-gradient(to bottom,#b4b4b4 0,#b4b4b4 3px,#5e5888 3px,#5e5888 10px,#b4b4b4 10px,#b4b4b4 16px)"></div>
<div class="a" style="left:1px;top:0;width:1px;height:542px;z-index:9;background:#d0d0d0"></div>
<div class="a" style="left:-1px;top:-12px;width:1267px;height:554px;border:1px solid #9c9c9c;border-left-color:transparent;border-radius:0 0 9px 9px;z-index:10;box-shadow:0 0 0 12px #fff"></div>
<div class="a" style="left:1264px;top:0;width:1px;height:534px;background:#dedede;z-index:9"></div>
<div class="a" style="left:1265px;top:0;width:1px;height:14px;background:#cfcfcf;z-index:11"></div>
</body>
</html>
